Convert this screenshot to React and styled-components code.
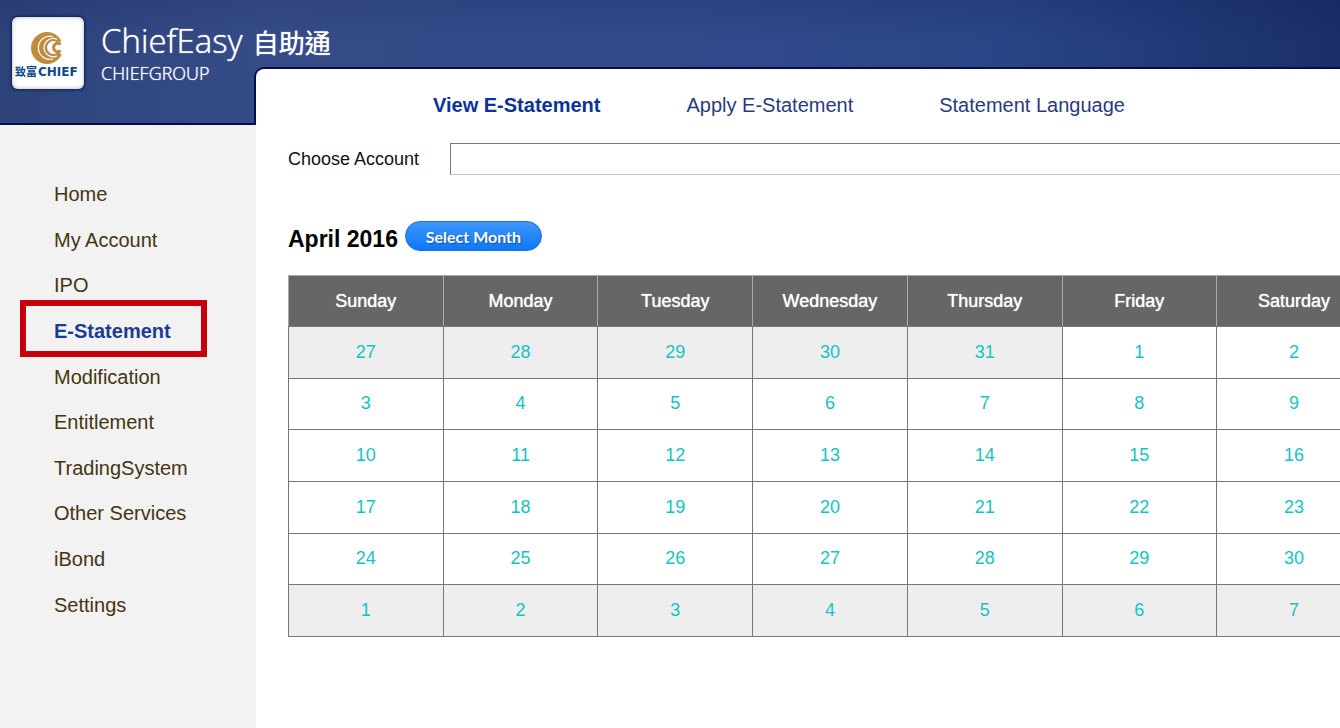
import React, {useState} from 'react';
import styled, {createGlobalStyle} from 'styled-components';

const navItems = [
  'Home',
  'My Account',
  'IPO',
  'E-Statement',
  'Modification',
  'Entitlement',
  'TradingSystem',
  'Other Services',
  'iBond',
  'Settings'
];

const tabs = ['View E-Statement', 'Apply E-Statement', 'Statement Language'];

const weekdays = ['Sunday', 'Monday', 'Tuesday', 'Wednesday', 'Thursday', 'Friday', 'Saturday'];

//April 2016 starts on a Friday, the grid is filled up with days of March and May
const weeks = [
  [27, 28, 29, 30, 31, 1, 2],
  [3, 4, 5, 6, 7, 8, 9],
  [10, 11, 12, 13, 14, 15, 16],
  [17, 18, 19, 20, 21, 22, 23],
  [24, 25, 26, 27, 28, 29, 30],
  [1, 2, 3, 4, 5, 6, 7]
];

const isOutside = (week, day) => (week === 0 && day > 20) || week === 5;

const Logo = () => (
  <svg width="72" height="72" viewBox="0 0 72 72" role="img" aria-label="Chief">
    <circle cx="35" cy="31" r="16" fill="#c08b3e" />
    <path d="M52 22L46 26A6.4 6.4 0 1 0 46 35L52 39Z" fill="#fff" />
    <g fill="none" stroke="#fff" strokeWidth="1.2">
      <path d="M41 19.6A11.6 11.6 0 1 0 41 42" />
      <path d="M45 22.2A9.2 9.2 0 1 0 45 39" />
    </g>
    <path d="M48.6 27.4A4.2 4.2 0 1 0 48.6 33.6" fill="none" stroke="#c08b3e" strokeWidth="3" />
    <text x="3" y="59" fontSize="11" fontWeight="700" fill="#0d4a8c" fontFamily='"Noto Sans CJK TC", sans-serif'>致富</text>
    <text x="26" y="59" fontSize="12" fontWeight="700" fill="#0d4a8c" fontFamily='"DejaVu Sans", sans-serif'>CHIEF</text>
  </svg>
);

const App = () => {
  const [page, setPage] = useState('E-Statement');
  const [tab, setTab] = useState('View E-Statement');

  return (
    <React.Fragment>
      <GlobalStyle />
      <Page>
        <Header>
          <LogoCard><Logo /></LogoCard>
          <BrandText>
            <BrandName>ChiefEasy <BrandChinese lang="zh-Hant">自助通</BrandChinese></BrandName>
            <BrandGroup>CHIEFGROUP</BrandGroup>
          </BrandText>
        </Header>

        <Sidebar>
          <NavList>
            {navItems.map(item => (
              <NavItem key={item} $active={item === page}>
                <NavLink href="#" $active={item === page} onClick={() => setPage(item)}>{item}</NavLink>
              </NavItem>
            ))}
          </NavList>
        </Sidebar>

        <Main>
          <Tabs>
            {tabs.map(name => (
              <TabLink key={name} href="#" $active={name === tab} onClick={() => setTab(name)}>{name}</TabLink>
            ))}
          </Tabs>

          <AccountRow>
            <AccountLabel htmlFor="account">Choose Account</AccountLabel>
            <AccountInput id="account" type="text" />
          </AccountRow>

          <MonthRow>
            <MonthTitle>April 2016</MonthTitle>
            <MonthButton type="button">Select Month</MonthButton>
          </MonthRow>

          <Calendar>
            <thead>
              <tr>
                {weekdays.map(day => <DayName key={day} scope="col">{day}</DayName>)}
              </tr>
            </thead>
            <tbody>
              {weeks.map((week, i) => (
                <tr key={i}>
                  {week.map(day => (
                    <Day key={day} $outside={isOutside(i, day)}>
                      <DayLink href="#">{day}</DayLink>
                    </Day>
                  ))}
                </tr>
              ))}
            </tbody>
          </Calendar>
        </Main>
      </Page>
    </React.Fragment>
  )
};

const GlobalStyle = createGlobalStyle`
  *, *::before {
    box-sizing: border-box;
  }

  body {
    margin: 0;
    background: #fff;
    font-family: "Liberation Sans", Arial, sans-serif;
    overflow-x: hidden;
  }

  a {
    text-decoration: none;
  }
`;

const Page = styled.div`
  display: grid;
  grid-template-columns: 256px minmax(0, 1fr);
  grid-template-rows: 69px 56px 1fr;
  min-height: 100vh;
`;

//The header lies behind the top of the main panel
const Header = styled.header`
  grid-column: 1 / -1;
  grid-row: 1 / 3;
  display: flex;
  align-items: flex-start;
  gap: 17px;
  padding: 17px 12px;
  border-bottom: 2px solid #020f4c;
  background:
    linear-gradient(to bottom, rgba(10, 20, 80, 0.15), rgba(10, 20, 80, 0) 40px),
    linear-gradient(to right, #2e437a, #364c88 20%, #31498a 55%, #2a4585 75%, #1a2e6a);
`;

const LogoCard = styled.div`
  display: flex;
  border-radius: 6px;
  background: #fff;
  box-shadow: inset 0 0 4px #b5b5b5, 0 0 3px 1px #0c1d5c;
`;

const BrandText = styled.div`
  color: #fff;
  font-family: "Open Sans", "Noto Sans CJK TC", sans-serif;
  text-shadow: 0 0 1px #fff;
`;

const BrandName = styled.h1`
  display: flex;
  align-items: baseline;
  gap: 10px;
  margin: 0;
  font-size: 33px;
  font-weight: 300;
  line-height: 48px;
`;

const BrandChinese = styled.span`
  font-size: 26px;
  font-weight: 400;
  line-height: 26px;
`;

const BrandGroup = styled.p`
  margin: 0;
  font-size: 18px;
  font-weight: 300;
  line-height: 16px;
`;

const Sidebar = styled.nav`
  position: relative;
  z-index: 1;
  grid-column: 1;
  grid-row: 3;
  padding-top: 47px;
  background: #f2f2f2;
`;

const NavList = styled.ul`
  display: grid;
  grid-auto-rows: 1fr;
  height: 456px;
  margin: 0;
  padding: 0;
  list-style: none;
`;

//The current item carries a red frame that is larger than its row
const NavItem = styled.li`
  position: relative;
  display: flex;
  align-items: center;
  padding-left: 54px;

  &::before {
    content: "";
    display: ${props => props.$active ? 'block' : 'none'};
    position: absolute;
    top: -9px;
    left: 20px;
    width: 187px;
    height: 57px;
    border: 6px solid #c7000b;
    pointer-events: none;
  }
`;

const NavLink = styled.a`
  color: ${props => props.$active ? '#1c3c94' : '#463510'};
  font-size: 20px;
  font-weight: ${props => props.$active ? 700 : 400};
`;

const Main = styled.main`
  grid-column: 2;
  grid-row: 2 / 4;
  padding: 20px 0 32px 32px;
  border-top-left-radius: 8px;
  background: #fff;
  box-shadow: 0 0 0 2px #020f4c;
`;

const Tabs = styled.div`
  display: flex;
  gap: 86px;
  padding-left: 145px;
`;

const TabLink = styled.a`
  color: ${props => props.$active ? '#0b3299' : '#2b3a80'};
  font-size: 20px;
  font-weight: ${props => props.$active ? 700 : 400};
  line-height: 32px;
`;

const AccountRow = styled.div`
  display: flex;
  align-items: center;
  margin-top: 22px;
  margin-right: -32px;
`;

const AccountLabel = styled.label`
  width: 162px;
  color: #111;
  font-size: 18px;
`;

const AccountInput = styled.input`
  flex: 1;
  height: 32px;
  padding: 0 8px;
  border: 1px solid #c8c8c8;
  border-top-color: #777;
  border-left-color: #777;
  font-size: 18px;
`;

const MonthRow = styled.div`
  display: flex;
  align-items: center;
  gap: 7px;
  margin-top: 45px;
`;

const MonthTitle = styled.h2`
  margin: 0;
  padding-top: 6px;
  font-size: 23px;
  line-height: 26px;
`;

const MonthButton = styled.button`
  height: 30px;
  width: 137px;
  padding: 0;
  border: 1px solid #1870dc;
  border-radius: 15px;
  background: linear-gradient(to bottom, #3f96f8, #0d78fb);
  color: #fff;
  font-family: Lato, sans-serif;
  font-size: 16px;
  font-weight: 700;
  text-shadow: 1px 1px 1px #1c4f9c;
`;

const Calendar = styled.table`
  width: calc(100% + 32px);
  height: 362px;
  margin-top: 23px;
  border-collapse: collapse;
  table-layout: fixed;
`;

const DayName = styled.th`
  height: 51px;
  padding: 0;
  border: 1px solid #aaa;
  border-bottom-color: #777;
  background: #666;
  color: #fff;
  font-size: 18px;
  font-weight: 400;
  text-shadow: 0 0 1px #fff;
`;

const Day = styled.td`
  padding: 0;
  border: 1px solid #777;
  background: ${props => props.$outside ? '#eee' : '#fff'};
  text-align: center;
`;

const DayLink = styled.a`
  color: #14c4c0;
  font-size: 18px;
`;

export default App
